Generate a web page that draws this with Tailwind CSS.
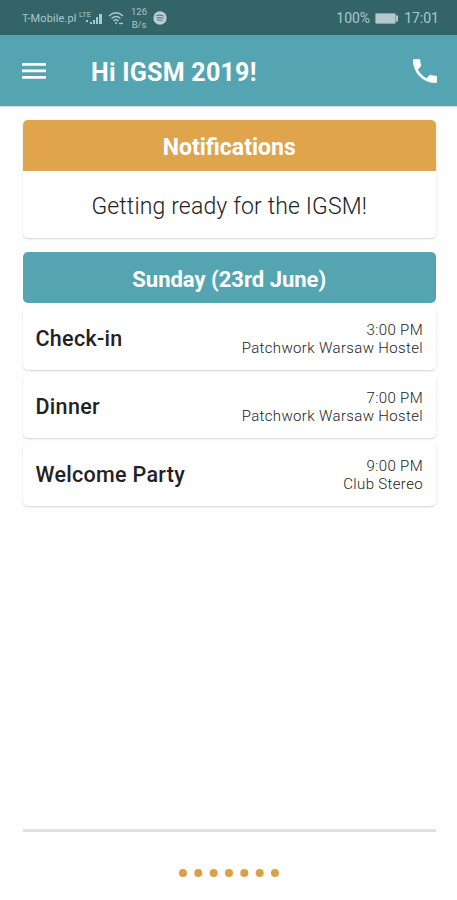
<!DOCTYPE html>
<html lang="en">
<head>
<meta charset="utf-8">
<title>Hi IGSM 2019!</title>
<script src="https://cdn.jsdelivr.net/npm/@tailwindcss/browser@4"></script>
</head>
<body class="flex h-[900px] w-[457px] flex-col overflow-hidden bg-[#fefefe] font-[Roboto,sans-serif] text-[#222]">
  <div class="flex h-[35px] shrink-0 items-center justify-between bg-[#336468] pl-[22px] pr-[18px] pt-[1px] text-[#a9c9cc]">
    <div class="flex items-center">
      <span class="w-[57px] whitespace-nowrap text-[11px] leading-none tracking-[0.1px]">T-Mobile.pl</span>
      <svg class="h-[15px] w-[26px]" viewBox="0 0 26 15" fill="currentColor">
        <text x="0" y="6" font-size="7" textLength="12" lengthAdjust="spacingAndGlyphs">LTE</text>
        <path d="M7 9h2v2H7zM11 11h2v2h-2zM14 9h2v4h-2zM17 6h2v7h-2zM20 3h3v10h-3z"/>
      </svg>
      <svg class="ml-[3px] h-[15px] w-[17px]" viewBox="0 0 17 15" fill="none" stroke="currentColor" stroke-width="1.400">
        <path d="M1 5Q8 -1.500 15 5M3.500 7.500Q8 3.500 12.500 7.500M5.500 10Q8 7.500 10.500 10"/>
        <circle cx="8" cy="12" r="1" fill="currentColor" stroke="none"/>
        <path d="M11 12.500h4"/>
      </svg>
      <span class="ml-[5px] flex w-[18px] flex-col items-center text-[9.500px] leading-[13.500px]"><span>126</span><span>B/s</span></span>
      <svg class="ml-[5px] h-[14px] w-[14px]" viewBox="0 0 14 14">
        <circle cx="7" cy="7" r="6.700" fill="#bdced1"/>
        <path d="M3 4.800Q7 3.300 11 5.300M3.500 7.200Q7 5.900 10.300 7.700M4 9.400Q7 8.400 9.600 9.900" fill="none" stroke="#5c8287" stroke-width="1.200"/>
      </svg>
    </div>
    <div class="flex items-center text-[14px] leading-none">
      <span>100%</span>
      <svg class="mx-[5px] h-[11px] w-[24px]" viewBox="0 0 24 11"><rect x=".5" y=".5" width="20" height="10" rx="1" fill="#b4c8cc" stroke="#83a5a9"/><path d="M22 2.500v6" stroke="#a9c9cc" stroke-width="2"/></svg>
      <span>17:01</span>
    </div>
  </div>
  <header class="flex h-[71px] shrink-0 items-center bg-[#54a5b1] px-[22px] text-white shadow-[0_1px_1px_#d8e2e4]">
    <svg class="h-[18px] w-[24px]" viewBox="0 0 24 18" fill="currentColor"><path d="M0 1h24v2.700H0zM0 7.500h24v2.700H0zM0 14h24v2.700H0z"/></svg>
    <h1 class="ml-[45px] whitespace-nowrap pt-[4px] text-[25px] font-bold leading-none tracking-[0.25px]">Hi IGSM 2019!</h1>
    <svg class="-mr-[2px] ml-auto h-[24px] w-[24px]" viewBox="3 3 18 18" fill="currentColor"><path d="M6.620 10.790c1.440 2.830 3.760 5.140 6.590 6.590l2.200-2.200c.27-.27.67-.36 1.020-.24 1.120.37 2.330.57 3.570.57.55 0 1 .45 1 1V20c0 .55-.45 1-1 1-9.390 0-17-7.610-17-17 0-.55.450-1 1-1h3.500c.55 0 1 .45 1 1 0 1.250.2 2.450.57 3.570.11.35.03.74-.25 1.020z"/></svg>
  </header>
  <main class="flex flex-1 flex-col pl-[22.500px] pr-[21px] pt-[14px]">
    <section class="h-[118px] overflow-hidden rounded-[5px] bg-white text-center shadow-[0_1px_2px_#0000002b]">
      <h2 class="h-[51px] bg-[#dfa44c] text-[23px] font-bold leading-[56px] text-white">Notifications</h2>
      <p class="text-[23px] font-light leading-[72px] tracking-[0.15px]">Getting ready for the IGSM!</p>
    </section>
    <h2 class="mt-[14px] h-[51px] rounded-[5px] bg-[#54a5b1] text-center text-[22px] font-bold leading-[55px] text-white">Sunday (23rd June)</h2>
    <ul class="mt-[4px] flex flex-col gap-[5px]">
      <li class="flex h-[63px] items-center justify-between rounded-[5px] bg-white px-[13px] pt-[2px] shadow-[0_1px_2px_#0000002b]">
        <span class="text-[21.500px] font-medium tracking-[0.3px]">Check-in</span>
        <span class="text-right text-[15px] font-light leading-[17.500px] tracking-[0.35px]">3:00 PM<br>Patchwork Warsaw Hostel</span>
      </li>
      <li class="flex h-[63px] items-center justify-between rounded-[5px] bg-white px-[13px] pt-[2px] shadow-[0_1px_2px_#0000002b]">
        <span class="text-[21.500px] font-medium tracking-[0.3px]">Dinner</span>
        <span class="text-right text-[15px] font-light leading-[17.500px] tracking-[0.35px]">7:00 PM<br>Patchwork Warsaw Hostel</span>
      </li>
      <li class="flex h-[63px] items-center justify-between rounded-[5px] bg-white px-[13px] pt-[2px] shadow-[0_1px_2px_#0000002b]">
        <span class="text-[21.500px] font-medium tracking-[0.3px]">Welcome Party</span>
        <span class="text-right text-[15px] font-light leading-[17.500px] tracking-[0.35px]">9:00 PM<br>Club Stereo</span>
      </li>
    </ul>
    <footer class="mt-auto h-[71px] border-t-[3px] border-[#e1e1e1] pt-[37px]">
      <svg class="mx-auto h-[8px] w-[100px]" viewBox="0 0 100 8" fill="#d9a145"><circle cx="4" cy="4" r="4"/><circle cx="19.300" cy="4" r="4"/><circle cx="34.700" cy="4" r="4"/><circle cx="50" cy="4" r="4"/><circle cx="65.300" cy="4" r="4"/><circle cx="80.700" cy="4" r="4"/><circle cx="96" cy="4" r="4"/></svg>
    </footer>
  </main>
</body>
</html>
